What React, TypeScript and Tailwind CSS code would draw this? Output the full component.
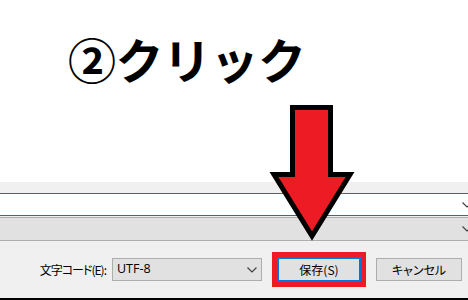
import React from "react";

const jp = "font-['Segoe_UI','Noto_Sans_CJK_JP',sans-serif]";

function Chevron({ className = "" }: { className?: string }) {
  return (
    <svg width="10" height="6" viewBox="0 0 10 6" className={className}>
      <polyline points="0.5,0.5 5,5 9.5,0.5" fill="none" stroke="#3c3c3c" strokeWidth="1.1" />
    </svg>
  );
}

export default function App() {
  return (
    <div className={`relative w-[468px] h-[300px] overflow-hidden bg-white ${jp}`}>
      {/* caption */}
      <div className="h-[182px] pl-[68px] pt-[34px]">
        <h1 className="text-[48px] leading-[48px] font-bold text-black font-['Noto_Sans_CJK_JP',sans-serif] tracking-[-0.5px]">
          ②クリック
        </h1>
      </div>

      {/* dialog bottom */}
      <div className="bg-[#f0f0f0]">
        <div className="h-[11px]" />
        <div className="w-[482px] h-[23px] border-y border-[#0078d7] bg-white flex items-center justify-end pr-[10px]">
          <Chevron />
        </div>
        <div className="h-[1px]" />
        <div className="w-[482px] h-[24px] border-y border-[#adadad] bg-[#e1e1e1] flex items-center justify-end pr-[10px]">
          <Chevron />
        </div>
        <div className="h-[57px] flex items-center justify-end pr-[6px] text-[12px] text-black [font-feature-settings:'palt']">
          <span className="font-['Noto_Sans_CJK_JP',sans-serif] tracking-[-1px]">文字コード(E):</span>
          <div className="ml-[6px] w-[150px] h-[23px] border border-[#adadad] bg-[#e1e1e1] flex items-center justify-between pl-[4px] pr-[4px]">
            <span className="font-['Open_Sans',sans-serif] text-[12.5px]">UTF-8</span>
            <Chevron />
          </div>
          <div className="ml-[10px] border-[5px] border-[#ed1c24]">
            <button className="w-[84px] h-[25px] border-2 border-[#0078d7] bg-[#e1e1e1] flex items-center justify-center font-['Noto_Sans_CJK_JP',sans-serif]">
              保存(S)
            </button>
          </div>
          <button className="ml-[10px] w-[86px] h-[23px] border border-[#adadad] bg-[#e1e1e1] flex items-center justify-center font-['Noto_Sans_CJK_JP',sans-serif]">
            キャンセル
          </button>
        </div>
        <div className="h-[2px] bg-black" />
      </div>

      {/* annotation arrow */}
      <svg className="absolute left-0 top-0" width="468" height="300" viewBox="0 0 468 300">
        <polygon
          points="292.5,107.5 330.5,107.5 330.5,174.5 350,174.5 312,236 274,174.5 292.5,174.5"
          fill="#ed1c24"
          stroke="#000"
          strokeWidth="5"
          strokeLinejoin="miter"
        />
      </svg>
    </div>
  );
}
